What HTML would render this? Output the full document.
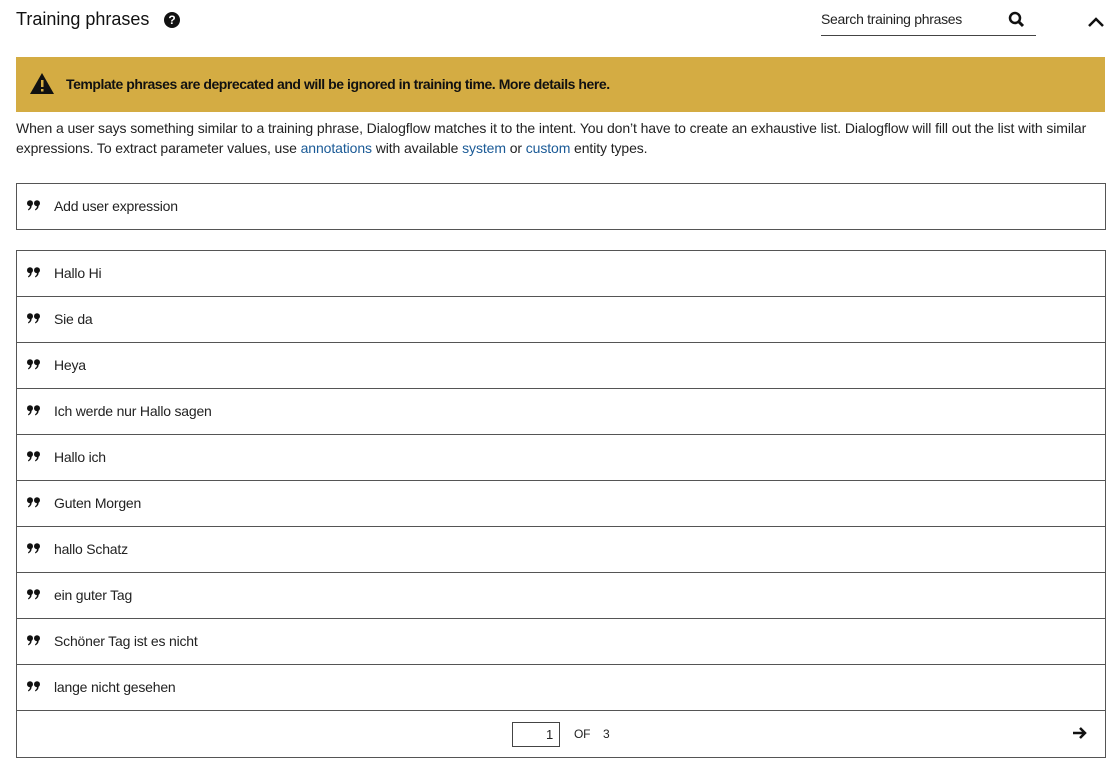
<!DOCTYPE html>
<html><head><meta charset="utf-8"><style>
*{box-sizing:border-box;margin:0;padding:0}
body{width:1119px;height:769px;background:#fff;font-family:"Liberation Sans",sans-serif;color:#202124;position:relative;overflow:hidden}
.abs{position:absolute}
.title{left:16px;top:9px;font-size:18px;color:#111}
.help{left:164px;top:12px;width:16px;height:16px;border-radius:50%;background:#111;color:#fff;font-size:12px;font-weight:bold;text-align:center;line-height:16px}
.search{left:821px;top:11px;width:215px;height:25px;border-bottom:1px solid #444;font-size:14px;color:#222;letter-spacing:-0.3px}
.banner{left:16px;top:57px;width:1089px;height:55px;background:#d4ac43}
.banner .t{position:absolute;left:50px;top:19px;font-size:14px;font-weight:bold;color:#111;letter-spacing:-0.45px}
.desc{left:16px;top:118px;width:1095px;font-size:14px;line-height:20px;color:#222;letter-spacing:-0.1px}
.desc a{color:#1a5a96;text-decoration:none}
.box{left:16px;width:1090px;border:1px solid #555}
.row{height:46px;border-top:1px solid #555;position:relative;font-size:14px;color:#222;letter-spacing:-0.2px}
.row:first-child{border-top:none;height:45px}
.row .q{position:absolute;left:10px;top:16px;width:14px;height:11px}
.row .s{position:absolute;left:37px;top:14px}
</style></head><body>
<svg width="0" height="0" style="position:absolute"><defs><symbol id="q" viewBox="0 0 14 11"><circle cx="3" cy="3.2" r="3" fill="#111"/><path d="M4.3 3.5Q5.8 8 1.5 10.5L1 9.3Q3.5 7.7 2.8 5Z" fill="#111"/><circle cx="10" cy="3.2" r="3" fill="#111"/><path d="M11.3 3.5Q12.8 8 8.5 10.5L8 9.3Q10.5 7.7 9.8 5Z" fill="#111"/></symbol></defs></svg>
<div class="abs title">Training phrases</div>
<div class="abs help">?</div>
<div class="abs search">Search training phrases
<svg style="position:absolute;left:187px;top:0" width="18" height="18" viewBox="0 0 18 18"><circle cx="7" cy="7" r="5" fill="none" stroke="#111" stroke-width="2.5"/><path d="M10.5 10.5L15 15" stroke="#111" stroke-width="3"/></svg></div>
<svg class="abs" style="left:1087px;top:16px" width="18" height="12" viewBox="0 0 18 12"><path d="M2 10L9 3L16 10" fill="none" stroke="#111" stroke-width="2.5"/></svg>
<div class="abs banner"><svg style="position:absolute;left:13px;top:15px" width="26" height="23" viewBox="0 0 26 23"><path d="M13 1L25 22H1Z" fill="#111"/><rect x="12" y="8" width="2.5" height="7" fill="#d4ac43"/><rect x="12" y="17" width="2.5" height="2.5" fill="#d4ac43"/></svg><div class="t">Template phrases are deprecated and will be ignored in training time. More details here.</div></div>
<div class="abs desc">When a user says something similar to a training phrase, Dialogflow matches it to the intent. You don’t have to create an exhaustive list. Dialogflow will fill out the list with similar expressions. To extract parameter values, use <a>annotations</a> with available <a>system</a> or <a>custom</a> entity types.</div>
<div class="abs box" style="top:183px;height:47px"><div class="row"><svg class="q"><use href="#q"/></svg><span class="s">Add user expression</span></div></div>
<div class="abs box" style="top:250px;height:508px">
<div class="row"><svg class="q"><use href="#q"/></svg><span class="s">Hallo Hi</span></div>
<div class="row"><svg class="q"><use href="#q"/></svg><span class="s">Sie da</span></div>
<div class="row"><svg class="q"><use href="#q"/></svg><span class="s">Heya</span></div>
<div class="row"><svg class="q"><use href="#q"/></svg><span class="s">Ich werde nur Hallo sagen</span></div>
<div class="row"><svg class="q"><use href="#q"/></svg><span class="s">Hallo ich</span></div>
<div class="row"><svg class="q"><use href="#q"/></svg><span class="s">Guten Morgen</span></div>
<div class="row"><svg class="q"><use href="#q"/></svg><span class="s">hallo Schatz</span></div>
<div class="row"><svg class="q"><use href="#q"/></svg><span class="s">ein guter Tag</span></div>
<div class="row"><svg class="q"><use href="#q"/></svg><span class="s">Schöner Tag ist es nicht</span></div>
<div class="row"><svg class="q"><use href="#q"/></svg><span class="s">lange nicht gesehen</span></div>
<div class="row">
<div style="position:absolute;left:495px;top:11px;width:48px;height:25px;border:1px solid #444;text-align:right;padding:4px 6px;font-size:13px">1</div>
<span style="position:absolute;left:557px;top:16px;font-size:12px">OF</span>
<span style="position:absolute;left:586px;top:16px;font-size:12px">3</span>
<svg style="position:absolute;left:1055px;top:15px" width="16" height="14" viewBox="0 0 16 14"><path d="M1 7H13M8 2L13 7L8 12" fill="none" stroke="#111" stroke-width="2.5"/></svg>
</div>
</div>
</body></html>
